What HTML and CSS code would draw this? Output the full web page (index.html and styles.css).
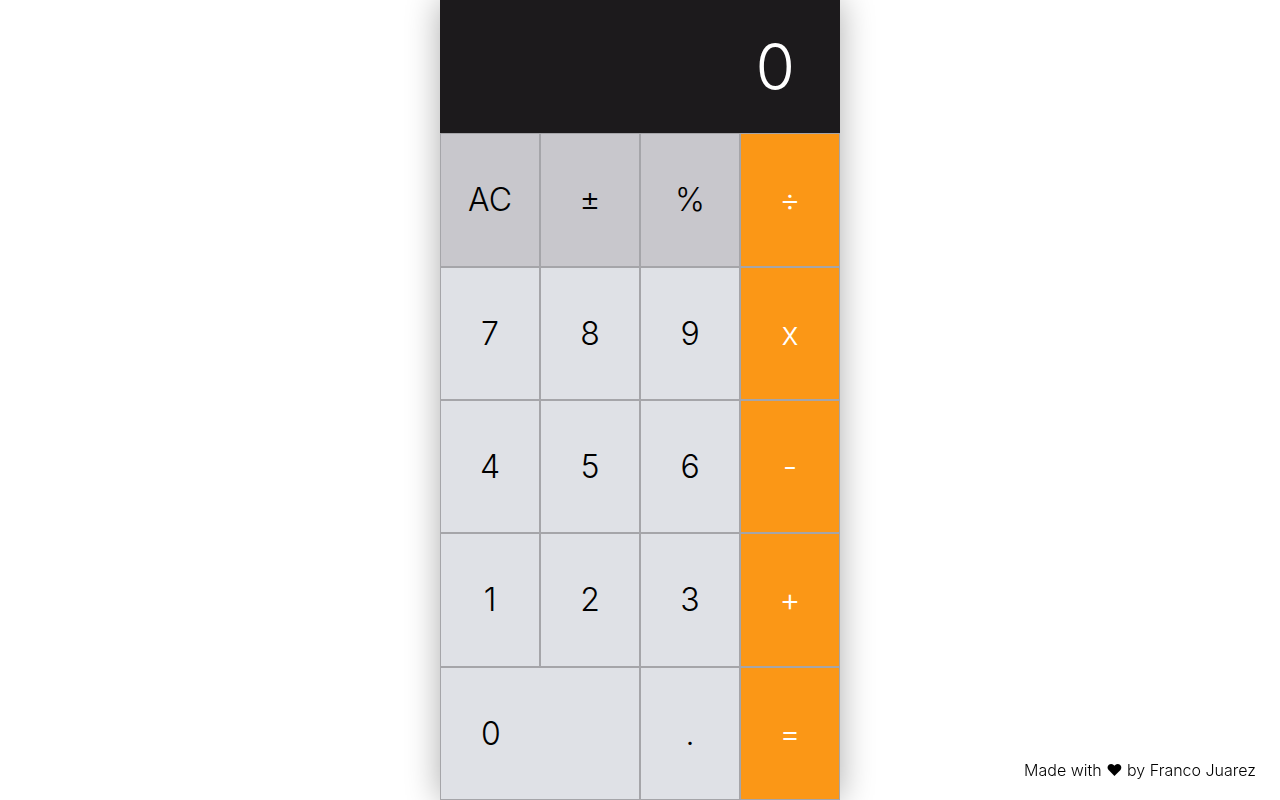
FILE: index.html
```html
<!DOCTYPE html>
<html lang="en">
<head>
<meta charset="utf-8">
<title>Calculator</title>
<link rel="stylesheet" href="styles.css">
</head>
<body>
<main class="calculator">
  <output class="display">0</output>
  <div class="keypad">
    <button class="key function">AC</button>
    <button class="key function">±</button>
    <button class="key function">%</button>
    <button class="key operator">÷</button>
    <button class="key">7</button>
    <button class="key">8</button>
    <button class="key">9</button>
    <button class="key operator">x</button>
    <button class="key">4</button>
    <button class="key">5</button>
    <button class="key">6</button>
    <button class="key operator">-</button>
    <button class="key">1</button>
    <button class="key">2</button>
    <button class="key">3</button>
    <button class="key operator">+</button>
    <button class="key zero">0</button>
    <button class="key">.</button>
    <button class="key operator">=</button>
  </div>
</main>
<footer class="credit">Made with ❤ by Franco Juarez</footer>
</body>
</html>
```
FILE: styles.css
```css
* { box-sizing: border-box; }
body {
  margin: 0;
  font-family: Inter, "DejaVu Sans", sans-serif;
  font-weight: 300;
  color: #000;
  background: #fff;
}
.calculator {
  display: grid;
  grid-template-rows: 1fr 5fr;
  width: 100%;
  max-width: 400px;
  height: 100vh;
  margin: 0 auto;
  box-shadow: 0 0 32px rgba(0, 0, 0, 0.33);
}
.display {
  display: flex;
  align-items: center;
  justify-content: flex-end;
  padding: 0 45px;
  font-size: 64px;
  color: #fff;
  background: #1c1a1c;
}
.keypad {
  display: grid;
  grid-template-columns: repeat(4, 1fr);
  grid-template-rows: repeat(5, 1fr);
}
.key {
  padding: 0;
  border: 1px solid #a5a5a9;
  border-radius: 0;
  font: inherit;
  font-size: 32px;
  color: #000;
  background: #dfe1e6;
}
.function { background: #c8c7cc; }
.operator {
  color: #fff;
  background: #fb9716;
}
.zero {
  grid-column: span 2;
  padding-left: 40px;
  text-align: left;
}
.credit {
  position: fixed;
  right: 24px;
  bottom: 20px;
  font-size: 16px;
}
```
